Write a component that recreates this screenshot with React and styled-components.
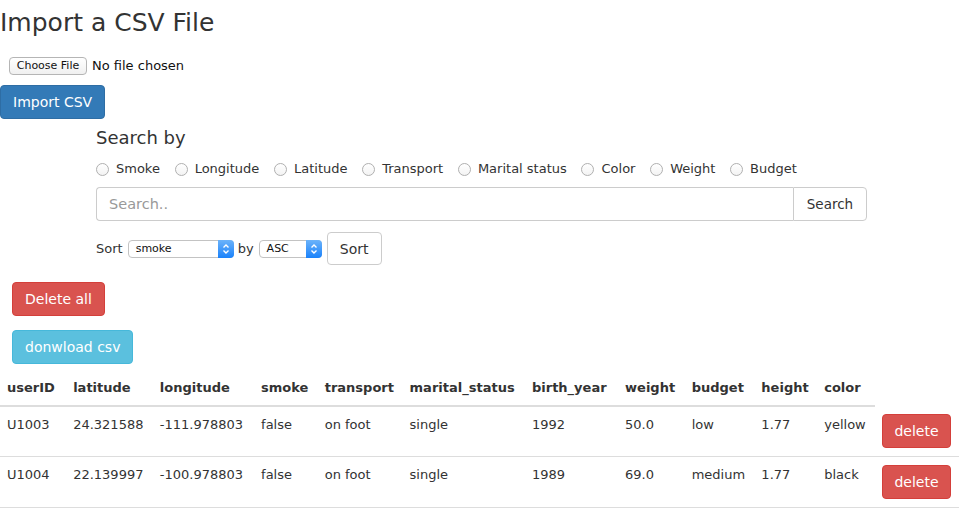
import styled, { createGlobalStyle } from 'styled-components';

const Global = createGlobalStyle`
  html, body { margin: 0; padding: 0; background: #fff; }
  body {
    font-family: "DejaVu Sans", Verdana, sans-serif;
    font-size: 13px;
    line-height: 20px;
    color: #333;
  }
  * { box-sizing: border-box; }
`

const Page = styled.div`
  width: 959px;
`
const Title = styled.h1`
  margin: 0;
  padding-top: 8px;
  font-size: 25px;
  font-weight: normal;
  line-height: 30px;
  color: #333;
`
const FileRow = styled.div`
  display: flex;
  align-items: center;
  gap: 5px;
  margin: 18px 0 0 9px;
  height: 19px;
  font-size: 13px;
  color: #111;
`
const FileButton = styled.span`
  display: inline-flex;
  align-items: center;
  justify-content: center;
  width: 78px; height: 18px;
  font-size: 11px;
  background: linear-gradient(#fff, #f0f0f0);
  border: 1px solid #b5b5b5;
  border-radius: 4px;
`
const Btn = styled.button`
  display: block;
  height: 34px;
  padding: 0 12px;
  font-family: inherit;
  font-size: 14px;
  color: #fff;
  background: ${p => p.$bg};
  border: 1px solid ${p => p.$border};
  border-radius: 4px;
  margin: ${p => p.$margin || 0};
`
const SearchBox = styled.div`
  margin-left: 96px;
  width: 771px;
`
const SearchTitle = styled.div`
  margin-top: 7px;
  font-size: 18px;
  line-height: 24px;
  color: #333;
`
const Radios = styled.div`
  display: flex;
  gap: 14.7px;
  margin-top: 9px;
  height: 20px;
  align-items: center;
`
const RadioLabel = styled.label`
  display: flex;
  align-items: center;
  gap: 7px;
  font-size: 13px;
  color: #333;
`
const RadioDot = styled.span`
  width: 13px; height: 13px;
  border: 1px solid #b0b0b0;
  border-radius: 50%;
  background: linear-gradient(#fff, #f3f3f3);
`
const InputGroup = styled.div`
  display: flex;
  margin-top: 8px;
  height: 34px;
`
const SearchInput = styled.input`
  flex: 1;
  height: 100%;
  padding: 6px 12px;
  font-family: inherit;
  font-size: 14.5px;
  color: #555;
  border: 1px solid #ccc;
  border-right: none;
  border-radius: 4px 0 0 4px;
  outline: none;
  &::placeholder { color: #999; }
`
const SearchBtn = styled.button`
  width: 74px;
  font-family: inherit;
  font-size: 13.5px;
  color: #333;
  background: #fff;
  border: 1px solid #ccc;
  border-radius: 0 4px 4px 0;
`
const SortRow = styled.div`
  display: flex;
  align-items: center;
  margin-top: 11px;
  height: 33px;
  font-size: 13px;
`
const SelectBox = styled.div`
  position: relative;
  display: flex;
  align-items: center;
  width: ${p => p.$w}px;
  height: 18px;
  margin: 0 4px 0 5px;
  padding-left: 7px;
  font-size: 11px;
  color: #111;
  background: #fff;
  border: 1px solid #c3c3c3;
  border-radius: 4px;
`
const Arrows = styled.span`
  position: absolute;
  top: -1px; right: -1px; bottom: -1px;
  width: 16px;
  display: flex;
  align-items: center;
  justify-content: center;
  background: linear-gradient(#6cb3fa, #1a82fb);
  border-radius: 0 4px 4px 0;
`
const SortBtn = styled.button`
  width: 55px;
  height: 33px;
  margin-left: 1px;
  font-family: inherit;
  font-size: 14px;
  color: #333;
  background: #fff;
  border: 1px solid #ccc;
  border-radius: 4px;
`
const Table = styled.table`
  margin-top: 4px;
  border-collapse: collapse;
  border-spacing: 0;
  th, td {
    padding: 8px 8px 8px 7px;
    text-align: left;
    vertical-align: top;
    white-space: nowrap;
  }
  th {
    padding-top: 10px;
    padding-bottom: 7px;
    font-weight: bold;
    border-bottom: 2px solid #ddd;
  }
  th.empty { border-bottom: none; }
  td { border-bottom: 1px solid #ddd; }
`
const DeleteBtn = styled.button`
  display: block;
  height: 34px;
  width: 69px;
  font-family: inherit;
  font-size: 14px;
  color: #fff;
  background: #d9534f;
  border: 1px solid #d43f3a;
  border-radius: 4px;
`

const Chevrons = () => (
  <svg width="8" height="12" viewBox="0 0 8 12">
    <path d="M1.5 4.5 L4 2 L6.5 4.5 M1.5 7.5 L4 10 L6.5 7.5" fill="none" stroke="#fff" strokeWidth="1.4" />
  </svg>
)

const fields = ['Smoke', 'Longitude', 'Latitude', 'Transport', 'Marital status', 'Color', 'Weight', 'Budget']
const cols = ['userID', 'latitude', 'longitude', 'smoke', 'transport', 'marital_status', 'birth_year', 'weight', 'budget', 'height', 'color']
const rows = [
  ['U1003', '24.321588', '-111.978803', 'false', 'on foot', 'single', '1992', '50.0', 'low', '1.77', 'yellow'],
  ['U1004', '22.139997', '-100.978803', 'false', 'on foot', 'single', '1989', '69.0', 'medium', '1.77', 'black'],
]
const widths = [67, 87, 102, 64, 85, 123, 94, 67, 70, 63, 58]

export default function App() {
  return (
    <Page>
      <Global />
      <Title>Import a CSV File</Title>
      <FileRow>
        <FileButton>Choose File</FileButton>
        <span>No file chosen</span>
      </FileRow>
      <Btn $bg="#337ab7" $border="#2e6da4" $margin="10px 0 0 0">Import CSV</Btn>
      <SearchBox>
        <SearchTitle>Search by</SearchTitle>
        <Radios>
          {fields.map(f => (
            <RadioLabel key={f}><RadioDot />{f}</RadioLabel>
          ))}
        </Radios>
        <InputGroup>
          <SearchInput placeholder="Search.." />
          <SearchBtn>Search</SearchBtn>
        </InputGroup>
        <SortRow>
          Sort
          <SelectBox $w={106}>smoke<Arrows><Chevrons /></Arrows></SelectBox>
          by
          <SelectBox $w={63}>ASC<Arrows><Chevrons /></Arrows></SelectBox>
          <SortBtn>Sort</SortBtn>
        </SortRow>
      </SearchBox>
      <Btn $bg="#d9534f" $border="#d43f3a" $margin="17px 0 0 12px">Delete all</Btn>
      <Btn $bg="#5bc0de" $border="#46b8da" $margin="14px 0 0 12px">donwload csv</Btn>
      <Table>
        <thead>
          <tr>
            {cols.map((c, i) => <th key={c} style={{ width: widths[i] }}>{c}</th>)}
            <th className="empty" />
          </tr>
        </thead>
        <tbody>
          {rows.map(r => (
            <tr key={r[0]}>
              {r.map((v, i) => <td key={i}>{v}</td>)}
              <td><DeleteBtn>delete</DeleteBtn></td>
            </tr>
          ))}
        </tbody>
      </Table>
    </Page>
  )
}
